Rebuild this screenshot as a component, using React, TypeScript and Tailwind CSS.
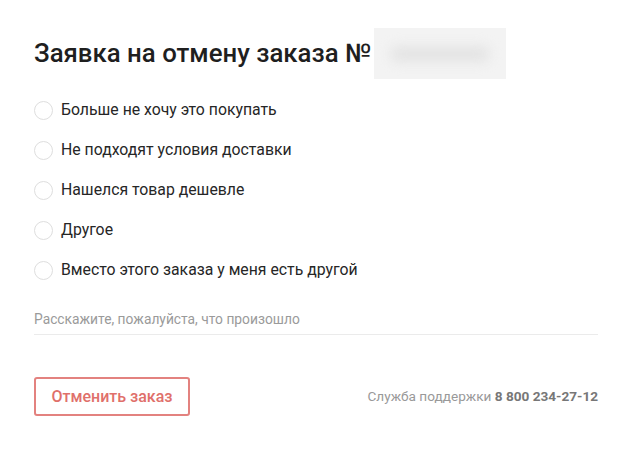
import React from "react";

const reasons = [
  "Больше не хочу это покупать",
  "Не подходят условия доставки",
  "Нашелся товар дешевле",
  "Другое",
  "Вместо этого заказа у меня есть другой",
];

export default function App() {
  return (
    <div className="w-[629px] h-[452px] bg-white pl-[34px] pr-[31px] pt-[28px] text-[#222] font-['Roboto',sans-serif]">
      <div className="flex items-center h-[51px]">
        <h1 className="text-[25.8px] font-medium leading-none text-[#1f1f1f]">Заявка на отмену заказа №</h1>
        <div className="ml-[3px] w-[132px] h-[51px] bg-[#f3f3f3] flex items-center justify-center">
          <div className="w-[100px] h-[16px] bg-[#e4e4e4] blur-[6px] rounded-full" />
        </div>
      </div>
      <div className="mt-[11px] flex flex-col">
        {reasons.map((r) => (
          <label key={r} className="flex items-center h-[40px] cursor-pointer">
            <span className="w-[19px] h-[19px] rounded-full border border-[#dedede] bg-white shrink-0" />
            <span className="ml-[8px] text-[15.8px] text-[#262626]">{r}</span>
          </label>
        ))}
      </div>
      <div className="mt-[17px] border-b border-[#ebebeb] pb-[3px]">
        <input
          className="w-full text-[13.8px] outline-none placeholder-[#9a9a9a]"
          placeholder="Расскажите, пожалуйста, что произошло"
        />
      </div>
      <div className="mt-[42px] flex items-center justify-between">
        <button className="w-[156px] h-[39px] border-2 border-[#e3827f] rounded-[3px] text-[#e0706b] text-[16px] font-medium">
          Отменить заказ
        </button>
        <div className="text-[13.6px] text-[#999]">
          Служба поддержки <span className="font-bold text-[#777]">8 800 234-27-12</span>
        </div>
      </div>
    </div>
  );
}
